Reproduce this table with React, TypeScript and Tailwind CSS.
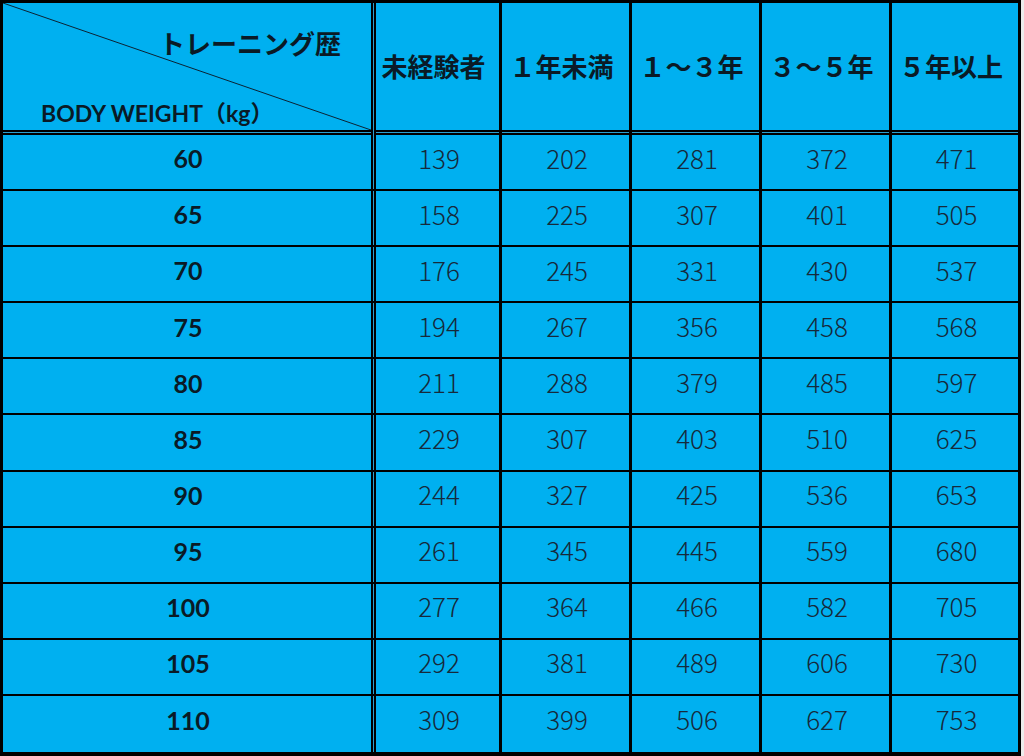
import React from "react";

const headers = ["未経験者", "１年未満", "１～３年", "３～５年", "５年以上"];

const rows: [number, number[]][] = [
  [60, [139, 202, 281, 372, 471]],
  [65, [158, 225, 307, 401, 505]],
  [70, [176, 245, 331, 430, 537]],
  [75, [194, 267, 356, 458, 568]],
  [80, [211, 288, 379, 485, 597]],
  [85, [229, 307, 403, 510, 625]],
  [90, [244, 327, 425, 536, 653]],
  [95, [261, 345, 445, 559, 680]],
  [100, [277, 364, 466, 582, 705]],
  [105, [292, 381, 489, 606, 730]],
  [110, [309, 399, 506, 627, 753]],
];

const jp = "font-['Noto_Sans_CJK_JP',sans-serif]";
const latin = "font-['Lato','Noto_Sans_CJK_JP',sans-serif]";

// black-cyan-black rule used for the double lines
function DoubleH() {
  return (
    <div className="flex flex-col">
      <div className="h-[2px] bg-black" />
      <div className="h-[1px] bg-[#2a9fd0]" />
      <div className="h-[2px] bg-black" />
    </div>
  );
}

function DoubleV() {
  return (
    <div className="flex">
      <div className="w-[2px] bg-black" />
      <div className="w-[1px] bg-[#2a9fd0]" />
      <div className="w-[2px] bg-black" />
    </div>
  );
}

export default function App() {
  return (
    <div className="w-[1024px] h-[756px] bg-black flex">
      <div className="w-[1021px] h-full pt-[3px] pl-[3px] pr-[3px] pb-[4px]">
        <div className="grid h-full grid-cols-[373px_126px_130px_130px_130px_126px] grid-rows-[132px_repeat(11,1fr)]">
          {/* header corner */}
          <div className="flex">
            <div className="flex-1 flex flex-col">
              <div className="relative flex-1 bg-[#00b0f0]">
                <svg className="absolute inset-0 w-full h-full" preserveAspectRatio="none" viewBox="0 0 100 100">
                  <line x1="0" y1="0" x2="100" y2="100" stroke="#0b2233" strokeWidth="1" vectorEffect="non-scaling-stroke" />
                </svg>
                <div className={`absolute left-[156px] top-[20px] text-[26px] font-bold text-[#0a1a26] ${jp}`}>
                  トレーニング歴
                </div>
                <div className={`absolute left-[38px] top-[93px] text-[23px] font-bold text-[#0a1a26] ${latin}`}>
                  BODY WEIGHT（kg）
                </div>
              </div>
              <DoubleH />
            </div>
            <DoubleV />
          </div>
          {headers.map((h, i) => (
            <div
              key={h}
              className={`flex flex-col border-black ${i < headers.length - 1 ? "border-r-[3px]" : ""}`}
            >
              <div
                className={`flex-1 bg-[#00b0f0] flex items-center justify-center pr-[8px] pb-[3px] text-[26px] font-bold text-[#0a1a26] ${jp}`}
              >
                {h}
              </div>
              <DoubleH />
            </div>
          ))}
          {rows.map(([w, vals], r) => (
            <React.Fragment key={w}>
              <div className={`flex border-black ${r < rows.length - 1 ? "border-b-2" : ""}`}>
                <div
                  className={`flex-1 bg-[#00b0f0] flex items-center justify-center pl-[2px] pb-[6px] text-[25px] font-bold text-[#0a1a26] ${latin}`}
                >
                  {w}
                </div>
                <DoubleV />
              </div>
              {vals.map((v, i) => (
                <div
                  key={i}
                  className={`bg-[#00b0f0] border-black flex items-center justify-center pl-[3px] pb-[10px] text-[26px] font-light text-[#17293a] ${jp} ${
                    i < vals.length - 1 ? "border-r-[3px]" : ""
                  } ${r < rows.length - 1 ? "border-b-2" : ""}`}
                >
                  {v}
                </div>
              ))}
            </React.Fragment>
          ))}
        </div>
      </div>
      <div className="w-[3px] h-full bg-[#ececec]" />
    </div>
  );
}
